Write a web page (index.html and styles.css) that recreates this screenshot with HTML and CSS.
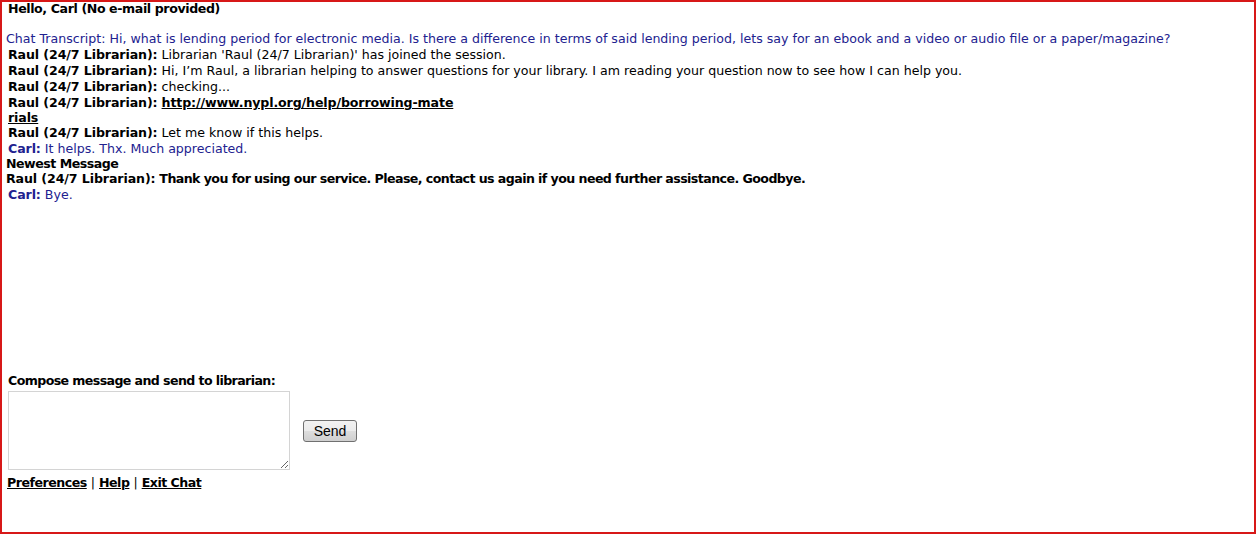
FILE: index.html
```html
<!DOCTYPE html>
<html lang="en">
<head>
   <meta charset="UTF-8">
   <title>Chat with a Librarian</title>
   <link rel="stylesheet" href="styles.css">
</head>
<body>
   <div class="frame">
       <div class="greeting">Hello, Carl (No e-mail provided)</div>

       <div class="transcript">
           <div class="line patron">Chat Transcript: Hi, what is lending period for electronic media. Is there a difference in terms of said lending period, lets say for an ebook and a video or audio file or a paper/magazine?</div>
           <div class="line msg"><b>Raul (24/7 Librarian):</b> Librarian 'Raul (24/7 Librarian)' has joined the session.</div>
           <div class="line msg"><b>Raul (24/7 Librarian):</b> Hi, I’m Raul, a librarian helping to answer questions for your library. I am reading your question now to see how I can help you.</div>
           <div class="line msg"><b>Raul (24/7 Librarian):</b> checking...</div>
           <div class="line msg link-line"><b>Raul (24/7 Librarian):</b> <a href="#">http://www.nypl.org/help/borrowing-mate<br>rials</a></div>
           <div class="line msg"><b>Raul (24/7 Librarian):</b> Let me know if this helps.</div>
           <div class="line msg patron"><b>Carl:</b> It helps. Thx. Much appreciated.</div>
           <div class="line newest">Newest Message</div>
           <div class="line closing"><b>Raul (24/7 Librarian):</b> Thank you for using our service. Please, contact us again if you need further assistance. Goodbye.</div>
           <div class="line msg patron"><b>Carl:</b> Bye.</div>
       </div>

       <form class="compose">
           <label class="compose-label" for="message">Compose message and send to librarian:</label>
           <div class="compose-row">
               <textarea id="message" class="compose-box" autofocus></textarea>
               <button type="button" class="send-btn">Send</button>
           </div>
           <div class="links">
               <a href="#">Preferences</a> | <a href="#">Help</a> | <a href="#">Exit Chat</a>
           </div>
       </form>
   </div>
</body>
</html>
```

FILE: styles.css
```css
html, body {
    margin: 0;
    padding: 0;
    background-color: #ffffff;
}

body {
    font-family: 'DejaVu Sans', Verdana, sans-serif;
    font-size: 12.6px;
    color: #000;
}

b {
    letter-spacing: -0.1px;
}

.frame {
    box-sizing: border-box;
    height: 534px;
    border: 2px solid #d71818;
    overflow: hidden;
}

.greeting {
    font-weight: bold;
    letter-spacing: -0.4px;
    line-height: 14px;
    padding-left: 6px;
}

.transcript {
    margin-top: 15px;
    height: 342px;
    padding-left: 4px;
}

.line {
    line-height: 16px;
    white-space: nowrap;
}

.msg {
    padding-left: 2px;
}

.patron {
    color: #22228f;
}

.link-line {
    line-height: 15px;
}

.link-line a {
    color: #000;
    font-weight: bold;
    letter-spacing: -0.12px;
}

.newest {
    font-weight: bold;
    letter-spacing: -0.5px;
    line-height: 14px;
}

.closing {
    font-weight: bold;
    letter-spacing: -0.57px;
}

.closing b {
    letter-spacing: -0.1px;
}

.compose {
    margin: 0;
    padding-left: 6px;
}

.compose-label {
    display: block;
    font-weight: bold;
    letter-spacing: -0.6px;
    line-height: 16px;
}

.compose-row {
    display: flex;
    align-items: center;
    margin-top: 2px;
}

.compose-box {
    box-sizing: border-box;
    width: 282px;
    height: 79px;
    margin: 0;
    border: 1px solid #d4d4d4;
    outline: none;
    resize: both;
    font-family: 'DejaVu Sans', Verdana, sans-serif;
    font-size: 13px;
    padding: 2px 3px;
}

.send-btn {
    box-sizing: border-box;
    width: 54px;
    height: 22px;
    margin-left: 13px;
    padding: 0;
    border: 1px solid #707070;
    border-radius: 3px;
    background: linear-gradient(#f2f2f2, #ebebeb 50%, #dddddd 51%, #cfcfcf);
    font-family: 'Liberation Sans', Arial, sans-serif;
    font-size: 14px;
    color: #000;
}

.links {
    margin-top: 5px;
    margin-left: -1px;
    line-height: 16px;
}

.links a {
    color: #000;
    font-weight: bold;
    letter-spacing: -0.5px;
}
```
